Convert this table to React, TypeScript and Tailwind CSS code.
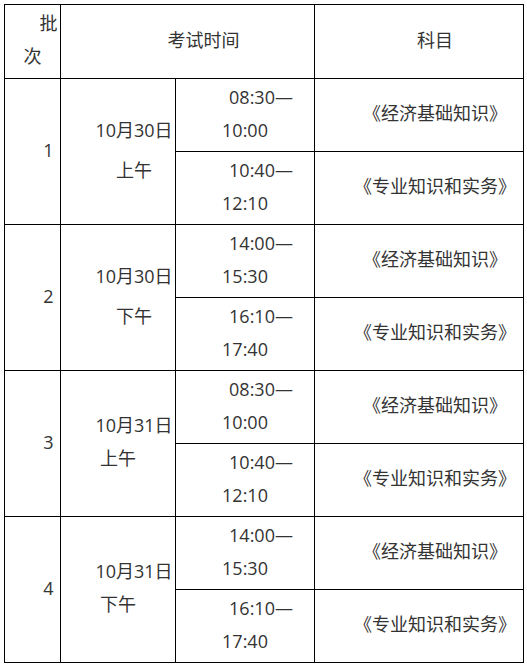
import React from "react";

type Batch = {
  no: string;
  date: string;
  half: string;
  split: boolean;
  slots: { from: string; to: string; subject: string }[];
};

const batches: Batch[] = [
  {
    no: "1",
    date: "10月30日",
    half: "上午",
    split: true,
    slots: [
      { from: "08:30—", to: "10:00", subject: "《经济基础知识》" },
      { from: "10:40—", to: "12:10", subject: "《专业知识和实务》" },
    ],
  },
  {
    no: "2",
    date: "10月30日",
    half: "下午",
    split: true,
    slots: [
      { from: "14:00—", to: "15:30", subject: "《经济基础知识》" },
      { from: "16:10—", to: "17:40", subject: "《专业知识和实务》" },
    ],
  },
  {
    no: "3",
    date: "10月31日",
    half: "上午",
    split: false,
    slots: [
      { from: "08:30—", to: "10:00", subject: "《经济基础知识》" },
      { from: "10:40—", to: "12:10", subject: "《专业知识和实务》" },
    ],
  },
  {
    no: "4",
    date: "10月31日",
    half: "下午",
    split: false,
    slots: [
      { from: "14:00—", to: "15:30", subject: "《经济基础知识》" },
      { from: "16:10—", to: "17:40", subject: "《专业知识和实务》" },
    ],
  },
];

const cell =
  "border border-black text-center align-middle p-0 pb-[3px] [text-indent:32px] leading-[33px]";

export default function App() {
  return (
    <div
      className="bg-white w-[527px] h-[668px] pt-[4px] pl-[4px] text-[18px] text-[#333]"
      style={{ fontFamily: '"Open Sans", "Noto Sans CJK SC", sans-serif' }}
    >
      <table className="border-collapse table-fixed w-[519px]">
        <colgroup>
          <col className="w-[56px]" />
          <col className="w-[115px]" />
          <col className="w-[139px]" />
          <col className="w-[209px]" />
        </colgroup>
        <tbody>
          <tr className="h-[74px]">
            <td className={cell}>
              批
              <br />
              次
            </td>
            <td className={cell} colSpan={2}>
              考试时间
            </td>
            <td className={cell}>科目</td>
          </tr>
          {batches.map((b) =>
            b.slots.map((s, i) => (
              <tr key={b.no + i} className="h-[73px]">
                {i === 0 && (
                  <>
                    <td className={cell} rowSpan={2}>
                      {b.no}
                    </td>
                    <td className={cell} rowSpan={2}>
                      {b.split ? (
                        <div className="flex flex-col gap-[7px]">
                          <div>{b.date}</div>
                          <div>{b.half}</div>
                        </div>
                      ) : (
                        <>
                          {b.date}
                          <br />
                          {b.half}
                        </>
                      )}
                    </td>
                  </>
                )}
                <td className={cell}>
                  {s.from}
                  <br />
                  {s.to}
                </td>
                <td className={cell}>{s.subject}</td>
              </tr>
            ))
          )}
        </tbody>
      </table>
    </div>
  );
}
